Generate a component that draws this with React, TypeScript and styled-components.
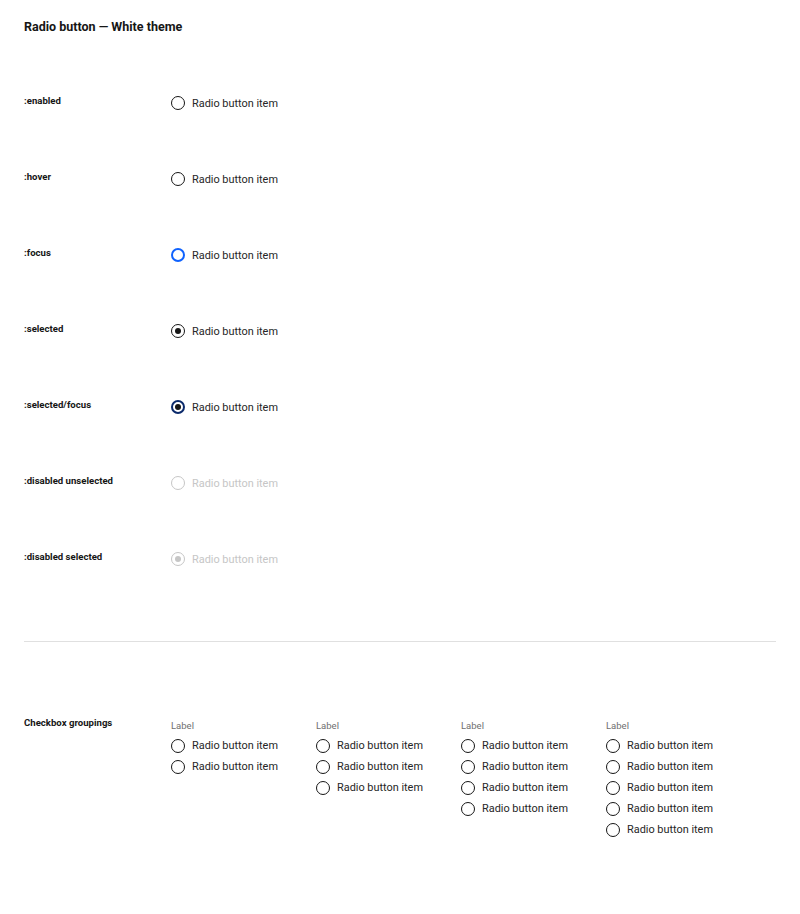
import React from "react";
import styled, { createGlobalStyle, css } from "styled-components";

const Global = createGlobalStyle`
  html, body { margin: 0; padding: 0; background: #ffffff; }
  body { font-family: Roboto, "Liberation Sans", Arial, sans-serif; color: #161616; }
`;

const Page = styled.div`
  padding: 19px 24px 40px 24px;
  width: 752px;
`;

const Title = styled.h1`
  margin: 0;
  font-size: 12.5px;
  line-height: 16px;
  font-weight: 700;
  color: #161616;
`;

const States = styled.div`
  margin-top: 58px;
  display: flex;
  flex-direction: column;
  gap: 56px;
`;

const Row = styled.div`
  display: grid;
  grid-template-columns: 147px 1fr;
  align-items: center;
  height: 20px;
`;

const StateLabel = styled.div`
  font-size: 9.6px;
  font-weight: 700;
  line-height: 12px;
  color: #161616;
  margin-top: -4px;
`;

const Divider = styled.hr`
  margin: 72px 0 0 0;
  border: none;
  border-top: 1px solid #e0e0e0;
  height: 0;
`;

const Groupings = styled.div`
  margin-top: 75px;
  display: grid;
  grid-template-columns: 147px repeat(4, 145px);
  align-items: start;
`;

const GroupHeading = styled.div`
  font-size: 9.6px;
  font-weight: 700;
  line-height: 12px;
  color: #161616;
`;

const Group = styled.div`
  display: flex;
  flex-direction: column;
`;

const GroupLabel = styled.div`
  font-size: 9.5px;
  line-height: 12px;
  padding-top: 3px;
  color: #6f6f6f;
  margin-bottom: 3px;
`;

type Variant = "enabled" | "focus" | "selected" | "selectedFocus" | "disabled" | "disabledSelected";

const Item = styled.label<{ $disabled?: boolean; $h?: number }>`
  display: flex;
  align-items: center;
  gap: 7px;
  height: ${(p) => p.$h ?? 20}px;
  font-size: 10.9px;
  color: ${(p) => (p.$disabled ? "#c6c6c6" : "#262626")};
  white-space: nowrap;
`;

const Circle = styled.span<{ $v: Variant }>`
  box-sizing: border-box;
  width: 14px;
  height: 14px;
  border-radius: 50%;
  border: 1px solid #161616;
  display: inline-flex;
  align-items: center;
  justify-content: center;
  flex: none;
  ${(p) =>
    p.$v === "focus" &&
    css`
      border: 2px solid #0f62fe;
    `}
  ${(p) =>
    p.$v === "selectedFocus" &&
    css`
      border: 2px solid #0b2a6b;
    `}
  ${(p) =>
    (p.$v === "disabled" || p.$v === "disabledSelected") &&
    css`
      border-color: #c6c6c6;
    `}
`;

const Dot = styled.span<{ $disabled?: boolean }>`
  width: 6px;
  height: 6px;
  border-radius: 50%;
  background: ${(p) => (p.$disabled ? "#c6c6c6" : "#161616")};
`;

const Radio = ({ v = "enabled", h }: { v?: Variant; h?: number }) => {
  const disabled = v === "disabled" || v === "disabledSelected";
  const selected = v === "selected" || v === "selectedFocus" || v === "disabledSelected";
  return (
    <Item $disabled={disabled} $h={h}>
      <Circle $v={v}>{selected && <Dot $disabled={disabled} />}</Circle>
      Radio button item
    </Item>
  );
};

const states: { label: string; v: Variant }[] = [
  { label: ":enabled", v: "enabled" },
  { label: ":hover", v: "enabled" },
  { label: ":focus", v: "focus" },
  { label: ":selected", v: "selected" },
  { label: ":selected/focus", v: "selectedFocus" },
  { label: ":disabled unselected", v: "disabled" },
  { label: ":disabled selected", v: "disabledSelected" },
];

const groups = [2, 3, 4, 5];

export default function App() {
  return (
    <>
      <Global />
      <Page>
        <Title>Radio button — White theme</Title>
        <States>
          {states.map((s) => (
            <Row key={s.label}>
              <StateLabel>{s.label}</StateLabel>
              <div>
                <Radio v={s.v} />
              </div>
            </Row>
          ))}
        </States>
        <Divider />
        <Groupings>
          <GroupHeading>Checkbox groupings</GroupHeading>
          {groups.map((n, gi) => (
            <Group key={gi}>
              <GroupLabel>Label</GroupLabel>
              {Array.from({ length: n }).map((_, i) => (
                <Radio key={i} h={21} />
              ))}
            </Group>
          ))}
        </Groupings>
      </Page>
    </>
  );
}
